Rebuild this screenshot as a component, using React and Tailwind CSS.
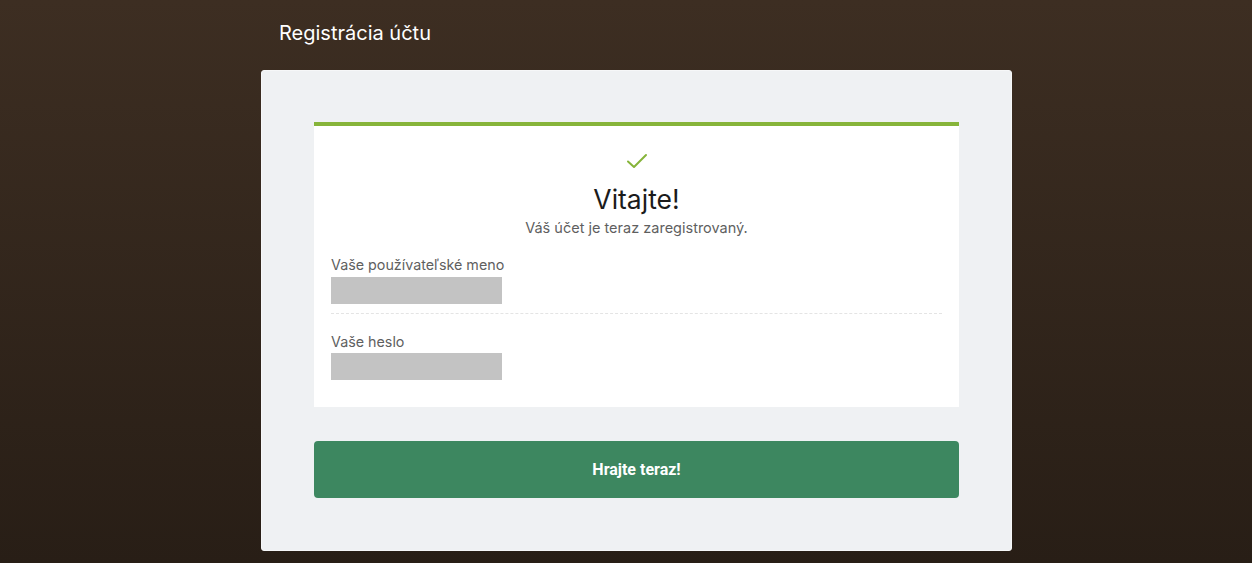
import React from "react";

// Registration success screen
function Field({ label, gap }) {
  return (
    <div className="flex flex-col">
      <span className="text-[14.3px] leading-[20px] text-[#5f5f5f]">{label}</span>
      <div className={`${gap} h-[27px] w-[171px] bg-[#c3c3c3]`} />
    </div>
  );
}

function App() {
  return (
    <div
      className="min-h-screen w-full bg-gradient-to-b from-[#3d2e22] to-[#281e16] pb-[12px]"
      style={{ fontFamily: "Inter, 'Noto Sans', sans-serif" }}
    >
      <div className="ml-[261px] w-[751px]">
        <h1 className="pl-[18px] pt-[19px] text-[20px] leading-[28px] text-white">Registrácia účtu</h1>

        <div className="mt-[23px] rounded-[3px] border border-[#f6f7f8] bg-[#eff1f3] pl-[52px] pr-[52px] pt-[51px] pb-[52px]">
          <div className="border-t-[4px] border-[#86b43a] bg-white px-[17px] pb-[27px]">
            <div className="flex flex-col items-center">
              <svg width="22" height="16" viewBox="0 0 22 16" className="mt-[27px]">
                <path d="M2 8.5 L8 14 L20 2" fill="none" stroke="#86b43a" strokeWidth="2" strokeLinecap="round" strokeLinejoin="round" />
              </svg>
              <h2 className="mt-[14px] text-[26.5px] leading-[32px] text-[#1b1b1b]">Vitajte!</h2>
              <p className="mt-[3px] text-[14.5px] leading-[20px] text-[#5f5f5f]">Váš účet je teraz zaregistrovaný.</p>
            </div>

            <div className="mt-[17px]">
              <Field label="Vaše používateľské meno" gap="mt-[2px]" />
            </div>
            <div className="mt-[9px] border-t border-dashed border-[#e4e4e4]" />
            <div className="mt-[18px]">
              <Field label="Vaše heslo" gap="mt-[1px]" />
            </div>
          </div>

          <button
            className="mt-[34px] flex h-[57px] w-full items-center justify-center rounded-[4px] bg-[#3d8760] text-[16px] font-bold text-white"
            style={{ fontFamily: "Roboto, sans-serif" }}
          >
            Hrajte teraz!
          </button>
        </div>
      </div>
    </div>
  );
}

export default App;
